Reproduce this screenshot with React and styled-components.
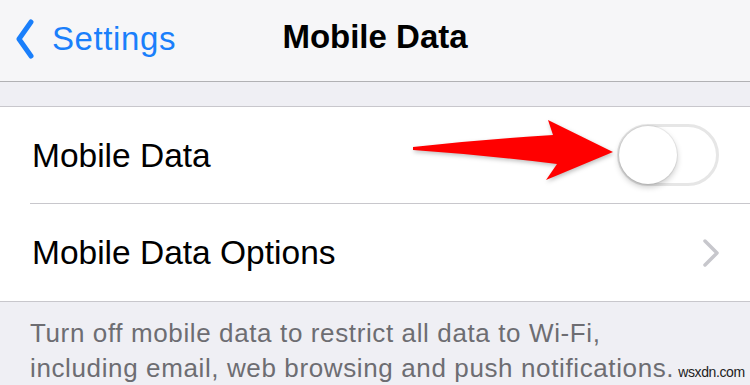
import React from 'react'
import styled, { createGlobalStyle } from 'styled-components'

const Global = createGlobalStyle`
  html, body {
    margin: 0;
    padding: 0;
    background: #efeff4;
    font-family: "Liberation Sans", Arial, sans-serif;
  }
`

const Screen = styled.div`
  width: 750px;
  height: 385px;
  overflow: hidden;
  background: #efeff4;
  display: flex;
  flex-direction: column;
`

const NavBar = styled.div`
  height: 81px;
  flex-shrink: 0;
  background: #f6f6f8;
  border-bottom: 1px solid #b1b1b4;
  display: grid;
  grid-template-columns: 1fr auto 1fr;
  align-items: center;
`

const Back = styled.div`
  display: flex;
  align-items: center;
  gap: 18px;
  padding-left: 16px;
  color: #1a7ffb;
  font-size: 33px;
  letter-spacing: 0.6px;
  margin-top: -4px;
`

const Title = styled.div`
  font-size: 33px;
  font-weight: 700;
  color: #000;
  margin-top: -8px;
`

const Spacer = styled.div`
  height: 24px;
  flex-shrink: 0;
  border-bottom: 1px solid #c8c7cc;
`

const Group = styled.div`
  background: #fff;
  border-bottom: 1px solid #c8c7cc;
  flex-shrink: 0;
`

const Row = styled.div`
  position: relative;
  height: 97px;
  display: flex;
  align-items: center;
  justify-content: space-between;
  padding: 0 30px 0 32px;
  &::after {
    content: '';
    display: ${p => (p.$divider ? 'block' : 'none')};
    position: absolute;
    left: 30px;
    right: 0;
    bottom: 0;
    height: 1px;
    background: #c8c7cc;
  }
`

const Label = styled.span`
  font-size: 33.5px;
  color: #000;
  margin-top: 1px;
`

const Switch = styled.div`
  width: 96px;
  height: 56px;
  border: 3px solid #e6e6e6;
  border-radius: 31px;
  background: #fff;
  position: relative;
  margin-right: 1px;
  margin-top: -2px;
`

const Knob = styled.div`
  position: absolute;
  left: -1px;
  top: -1px;
  width: 58px;
  height: 58px;
  border-radius: 50%;
  background: #fff;
  box-shadow: 0 3px 6px rgba(0, 0, 0, 0.22), 0 0 0 1px rgba(0, 0, 0, 0.06);
`

const Arrow = styled.svg`
  position: absolute;
  left: 405px;
  top: 5px;
  filter: drop-shadow(1px 2px 2px rgba(0, 0, 0, 0.25));
`

const Footer = styled.div`
  padding: 14px 30px 0 30px;
  font-size: 26px;
  letter-spacing: 0.62px;
  line-height: 35px;
  color: #6d6d72;
  white-space: nowrap;
`

const Mark = styled.span`
  font-size: 14px;
  letter-spacing: -0.4px;
  color: #222;
  margin-left: 4px;
`

export default function App() {
  return (
    <Screen>
      <Global />
      <NavBar>
        <Back>
          <svg width="18" height="40" viewBox="0 0 18 40">
            <path d="M15 3 L3 20 L15 37" fill="none" stroke="#1a7ffb" strokeWidth="5" strokeLinecap="round" strokeLinejoin="round" />
          </svg>
          Settings
        </Back>
        <Title>Mobile Data</Title>
        <div />
      </NavBar>
      <Spacer />
      <Group>
        <Row $divider>
          <Label>Mobile Data</Label>
          <Arrow width="215" height="80" viewBox="0 0 215 80">
            <path d="M8 35 Q80 27 148 23 L143 8 L208 40 L141 68 L152 52 Q80 43 8 38 Z" fill="#ff0000" />
          </Arrow>
          <Switch>
            <Knob />
          </Switch>
        </Row>
        <Row>
          <Label>Mobile Data Options</Label>
          <svg width="18" height="30" viewBox="0 0 18 30">
            <path d="M3 3 L15 15 L3 27" fill="none" stroke="#c7c7cc" strokeWidth="3.5" strokeLinecap="round" strokeLinejoin="round" />
          </svg>
        </Row>
      </Group>
      <Footer>
        Turn off mobile data to restrict all data to Wi-Fi,
        <br />
        including email, web browsing and push notifications.<Mark>wsxdn.com</Mark>
      </Footer>
    </Screen>
  )
}
